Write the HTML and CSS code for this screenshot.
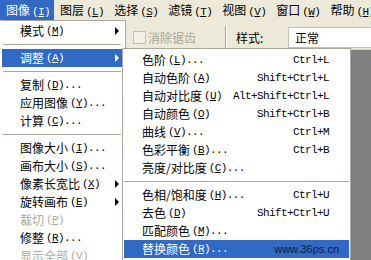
FILE: index.html
```html
<!DOCTYPE html>
<html lang="zh-CN">
<head>
    <meta charset="UTF-8">
    <meta name="viewport" content="width=device-width, initial-scale=1.0">
    <title>图像 - 调整</title>
    <link rel="stylesheet" href="styles.css">
</head>
<body>
    <div class="app">
        <div class="menubar">
            <span class="mb-item active">图像<span class="k">(<u>I</u>)</span></span>
            <span class="mb-item">图层<span class="k">(<u>L</u>)</span></span>
            <span class="mb-item">选择<span class="k">(<u>S</u>)</span></span>
            <span class="mb-item">滤镜<span class="k">(<u>T</u>)</span></span>
            <span class="mb-item">视图<span class="k">(<u>V</u>)</span></span>
            <span class="mb-item">窗口<span class="k">(<u>W</u>)</span></span>
            <span class="mb-item">帮助<span class="k">(<u>H</u>)</span></span>
        </div>
        <div class="options">
            <span class="check"><span class="box"></span>消除锯齿</span>
            <span class="vsep"></span>
            <span class="label">样式:</span>
            <span class="field">正常</span>
        </div>
        <div class="workspace"></div>

        <div class="menu menu-main">
            <div class="row">模式<span class="k">(<u>M</u>)</span><span class="arrow"></span></div>
            <div class="sep"></div>
            <div class="row hl">调整<span class="k">(<u>A</u>)</span><span class="arrow"></span></div>
            <div class="sep"></div>
            <div class="row">复制<span class="k">(<u>D</u>)...</span></div>
            <div class="row">应用图像<span class="k">(<u>Y</u>)...</span></div>
            <div class="row">计算<span class="k">(<u>C</u>)...</span></div>
            <div class="sep"></div>
            <div class="row">图像大小<span class="k">(<u>I</u>)...</span></div>
            <div class="row">画布大小<span class="k">(<u>S</u>)...</span></div>
            <div class="row">像素长宽比<span class="k">(<u>X</u>)</span><span class="arrow"></span></div>
            <div class="row">旋转画布<span class="k">(<u>E</u>)</span><span class="arrow"></span></div>
            <div class="row off">裁切<span class="k">(<u>P</u>)</span></div>
            <div class="row">修整<span class="k">(<u>R</u>)...</span></div>
            <div class="row off">显示全部<span class="k">(<u>V</u>)</span></div>
        </div>

        <div class="menu menu-sub">
            <div class="row">色阶<span class="k">(<u>L</u>)...</span><span class="key">Ctrl+L</span></div>
            <div class="row">自动色阶<span class="k">(<u>A</u>)</span><span class="key">Shift+Ctrl+L</span></div>
            <div class="row">自动对比度<span class="k">(<u>U</u>)</span><span class="key">Alt+Shift+Ctrl+L</span></div>
            <div class="row">自动颜色<span class="k">(<u>O</u>)</span><span class="key">Shift+Ctrl+B</span></div>
            <div class="row">曲线<span class="k">(<u>V</u>)...</span><span class="key">Ctrl+M</span></div>
            <div class="row">色彩平衡<span class="k">(<u>B</u>)...</span><span class="key">Ctrl+B</span></div>
            <div class="row">亮度/对比度<span class="k">(<u>C</u>)...</span></div>
            <div class="sep"></div>
            <div class="row">色相/饱和度<span class="k">(<u>H</u>)...</span><span class="key">Ctrl+U</span></div>
            <div class="row">去色<span class="k">(<u>D</u>)</span><span class="key">Shift+Ctrl+U</span></div>
            <div class="row">匹配颜色<span class="k">(<u>M</u>)...</span></div>
            <div class="row hl">替换颜色<span class="k">(<u>R</u>)...</span><span class="mark">www.36ps.cn</span></div>
        </div>
    </div>
</body>
</html>
```

FILE: styles.css
```css
body {
    margin: 0;
    padding: 0;
    font-family: "Noto Sans CJK SC", sans-serif;
    font-size: 12px;
    color: #000;
    overflow: hidden;
}
.app {
    position: relative;
    width: 371px;
    height: 260px;
    display: flex;
    flex-direction: column;
    overflow: hidden;
}
.k, .key {
    font-family: "Liberation Mono", monospace;
    font-size: 11px;
    letter-spacing: -0.6px;
}
.k {
    margin-left: 2px;
}
.menubar {
    height: 20px;
    display: flex;
    background-color: #ece9d8;
    flex-shrink: 0;
}
.mb-item {
    padding: 0 4px 0 6px;
    line-height: 20px;
    white-space: nowrap;
}
.mb-item.active {
    background-color: #316ac5;
    color: #fff;
}
.options {
    height: 23px;
    padding: 6px 0 0 133px;
    display: flex;
    align-items: center;
    background-color: #ece9d8;
    flex-shrink: 0;
}
.check {
    display: flex;
    align-items: center;
    color: #aca899;
}
.box {
    width: 11px;
    height: 11px;
    border: 1px solid #c2bfb2;
    background-color: #f1efe6;
    margin-right: 2px;
}
.vsep {
    width: 0;
    height: 23px;
    border-left: 1px solid #aca899;
    border-right: 1px solid #fff;
    margin-left: 29px;
}
.label {
    margin-left: 9px;
    width: 52px;
}
.field {
    flex: 1;
    height: 19px;
    line-height: 19px;
    padding-left: 6px;
    background-color: #fff;
    border: 1px solid #c5c2b2;
    border-right: none;
}
.workspace {
    flex: 1;
    background-color: #808080;
    border-top: 1px solid #d8d5c8;
}
.menu {
    position: absolute;
    background-color: #fff;
    border: 1px solid #aca899;
}
.menu-main {
    left: 0;
    top: 20px;
    width: 120px;
    padding: 1px 3px 1px 1px;
    border-left-color: #fff;
}
.menu-sub {
    left: 122px;
    top: 48px;
    width: 225px;
    padding: 2px 1px;
}
.row {
    height: 18px;
    line-height: 18px;
    display: flex;
    align-items: center;
    padding-left: 18px;
    padding-right: 3px;
    white-space: nowrap;
}
.menu-sub .row {
    padding-right: 20px;
}
.row.hl {
    background-color: #316ac5;
    color: #fff;
}
.row.off {
    color: #aca899;
}
.arrow {
    margin-left: auto;
    width: 0;
    height: 0;
    border-left: 4px solid #000;
    border-top: 4px solid transparent;
    border-bottom: 4px solid transparent;
}
.row.hl .arrow {
    border-left-color: #fff;
}
.key {
    margin-left: auto;
}
.mark {
    margin-left: auto;
    margin-right: -10px;
    font-family: "Liberation Sans", Arial, sans-serif;
    font-size: 11px;
    color: #0d1a3a;
}
.sep {
    height: 4px;
    margin: 0 1px 4px 1px;
    border-bottom: 1px solid #aca899;
    box-shadow: 0 1px 0 #fff;
}
.menu-sub .sep {
    margin: 0 0 4px 0;
}
```
